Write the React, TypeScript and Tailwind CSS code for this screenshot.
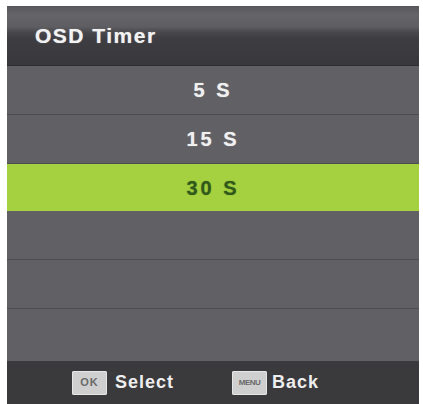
const rows = ['5 S', '15 S', '30 S', '', '', '']
const selected = 2

function Key({ label, small = false }: { label: string; small?: boolean }) {
  return (
    <span className="flex h-[24px] w-[35px] items-center justify-center rounded-[2px] bg-[#cfcfcf] shadow-[inset_0_0_0_1px_#e6e6e6]">
      <span
        className={
          small
            ? 'text-[8px] font-bold leading-none tracking-[-0.5px] text-[#6a6a6a]'
            : 'text-[11px] font-bold leading-none tracking-[1px] text-[#6a6a6a]'
        }
      >
        {label}
      </span>
    </span>
  )
}

export default function App() {
  return (
    <div className="h-[404px] w-[423px] overflow-hidden bg-white pl-[7px] pr-[4px] pt-[6px] font-['Liberation_Sans',Arial,sans-serif]">
      <div className="flex h-full flex-col bg-[#5f5f64]">
        <div className="flex h-[60px] items-center border-b border-[#2f2f33] bg-[linear-gradient(180deg,#58585c_0%,#656569_15%,#5e5e62_35%,#48484c_45%,#3e3e42_55%,#38383c_100%)] pl-[28px]">
          <span className="text-[21px] font-bold tracking-[1.5px] text-[#f2f2f2] [text-shadow:0_0_1px_rgba(255,255,255,0.6)]">
            OSD Timer
          </span>
        </div>
        {rows.map((label, i) => (
          <div
            key={i}
            className={
              i === selected
                ? 'flex h-[47px] items-center justify-center bg-[#a5d03f]'
                : i === rows.length - 1
                  ? 'flex h-[52px] items-center justify-center bg-[#606065]'
                  : 'flex h-[49px] items-center justify-center border-b border-[#4d4d51] bg-[#606065]'
            }
          >
            <span
              className={
                i === selected
                  ? 'text-[20px] font-bold tracking-[3px] text-[#30591a] [text-shadow:0_0_1px_rgba(48,89,26,0.6)]'
                  : 'text-[20px] font-bold tracking-[3px] text-[#f0f0f0] [text-shadow:0_0_1px_rgba(255,255,255,0.6)]'
              }
            >
              {label}
            </span>
          </div>
        ))}
        <div className="flex flex-1 items-center bg-[#3a3a3d] pl-[65px]">
          <Key label="OK" />
          <span className="ml-[8px] text-[18px] font-bold tracking-[1px] text-[#eeeeee]">Select</span>
          <span className="ml-[58px]">
            <Key label="MENU" small />
          </span>
          <span className="ml-[5px] text-[18px] font-bold tracking-[1px] text-[#eeeeee]">Back</span>
        </div>
      </div>
    </div>
  )
}
